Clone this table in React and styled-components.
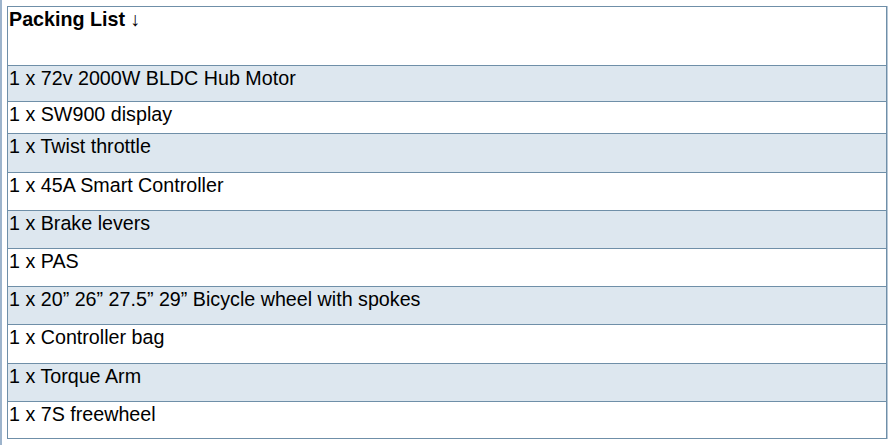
import styled, { createGlobalStyle } from 'styled-components';

const GlobalStyle = createGlobalStyle`
  body {
    margin: 0;
    background: #fff;
    font-family: 'Liberation Sans', Arial, sans-serif;
  }
`;

const Page = styled.div`
  width: 892px;
  height: 445px;
  box-sizing: border-box;
  border-left: 2px solid #9db4cc;
  padding: 6px 0 0 5px;
`;

const Table = styled.table`
  border-collapse: collapse;
  width: 880px;
  border: 1px solid #6f8fa8;
  box-shadow: 1px 0 0 #b9c9d8;
  font-size: 19.7px;
  color: #000;
`;

const Row = styled.tr`
  height: ${(p) => p.$h}px;
  background: ${(p) => (p.$shade ? '#dde7ef' : '#fff')};
`;

const Cell = styled.td`
  border: 1px solid #6f8fa8;
  padding: 0 2px 0 1px;
  vertical-align: top;
  line-height: 24px;
  font-weight: ${(p) => (p.$head ? 'bold' : 'normal')};
  white-space: nowrap;
`;

// item, row height
const items = [
  ['1 x 72v 2000W BLDC Hub Motor', 36],
  ['1 x SW900 display', 32],
  ['1 x Twist throttle', 39],
  ['1 x 45A Smart Controller', 38],
  ['1 x Brake levers', 38],
  ['1 x PAS', 38],
  ['1 x 20\u201d 26\u201d 27.5\u201d 29\u201d Bicycle wheel with spokes', 38],
  ['1 x Controller bag', 39],
  ['1 x Torque Arm', 38],
  ['1 x 7S freewheel', 37],
];

const App = () => {
  return (
    <Page>
      <GlobalStyle />
      <Table>
        <tbody>
          <Row $h={59}>
            <Cell $head>Packing List ↓</Cell>
          </Row>
          {items.map(([text, h], i) => (
            <Row key={text} $h={h} $shade={i % 2 === 0}>
              <Cell>{text}</Cell>
            </Row>
          ))}
        </tbody>
      </Table>
    </Page>
  );
};

export default App;
